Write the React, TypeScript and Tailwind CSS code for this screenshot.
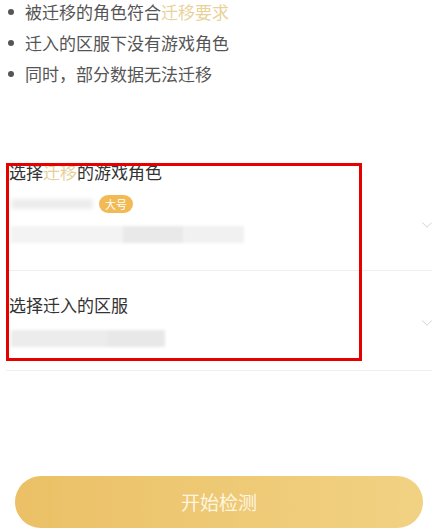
import { ChevronDown } from 'lucide-react'

const font = { fontFamily: '"Noto Sans CJK SC", "Noto Sans", sans-serif' }

function Bullet({ children }: { children: React.ReactNode }) {
  return (
    <li className="flex items-center h-[31px]">
      <span className="w-[6px] h-[6px] rounded-full bg-[#555] mr-[11px] ml-[8px]" />
      <span className="text-[17px] text-[#555] leading-none">{children}</span>
    </li>
  )
}

export default function App() {
  return (
    <div className="relative w-[439px] h-[528px] bg-white overflow-hidden" style={font}>
      {/* Rules list */}
      <ul className="mt-[-4px]">
        <Bullet>
          被迁移的角色符合<span className="text-[#e9d29a]">迁移要求</span>
        </Bullet>
        <Bullet>迁入的区服下没有游戏角色</Bullet>
        <Bullet>同时，部分数据无法迁移</Bullet>
      </ul>

      {/* Selectors */}
      <div className="mt-[71px] ml-[6px] mr-[7px]">
        <div className="relative h-[111px] border-b border-[#efefef] pl-[3px]">
          <div className="text-[17px] leading-[24px] text-[#333]">
            选择<span className="text-[#e6cf98]">迁移</span>的游戏角色
          </div>
          <div className="flex items-center mt-[10px] h-[20px]">
            <div className="ml-[2px] w-[82px] h-[10px] rounded bg-[#ececec] blur-[2px]" />
            <span className="ml-[6px] px-[6px] h-[18px] rounded-full bg-[#f2ba55] text-white text-[11px] leading-[18px]">
              大号
            </span>
          </div>
          <div className="flex mt-[12px] ml-[2px] h-[17px] blur-[1.5px]">
            <div className="w-[112px] bg-[#f3f3f3]" />
            <div className="w-[60px] bg-[#e9e9e9]" />
            <div className="w-[61px] bg-[#f1f1f1]" />
          </div>
          <ChevronDown className="absolute right-[-4px] top-[56px] w-[18px] h-[18px] text-[#d2d2d2]" strokeWidth={1.3} />
        </div>
        <div className="relative h-[100px] border-b border-[#efefef] pl-[3px] pt-[22px]">
          <div className="text-[17px] leading-[24px] text-[#333]">选择迁入的区服</div>
          <div className="flex mt-[13px] ml-[2px] h-[17px] blur-[1.5px]">
            <div className="w-[96px] bg-[#ececec]" />
            <div className="w-[58px] bg-[#e8e8e8]" />
          </div>
          <ChevronDown className="absolute right-[-4px] top-[43px] w-[18px] h-[18px] text-[#d2d2d2]" strokeWidth={1.3} />
        </div>
      </div>

      {/* Start button */}
      <button className="absolute left-[15px] top-[476px] w-[408px] h-[52px] rounded-full bg-gradient-to-r from-[#ebc066] to-[#f1d283] text-[#fff6e0] text-[19px]">
        开始检测
      </button>

      {/* Annotation frame */}
      <div className="absolute left-[6px] top-[163px] w-[356px] h-[198px] border-[3px] border-[#e60000] pointer-events-none" />
    </div>
  )
}
